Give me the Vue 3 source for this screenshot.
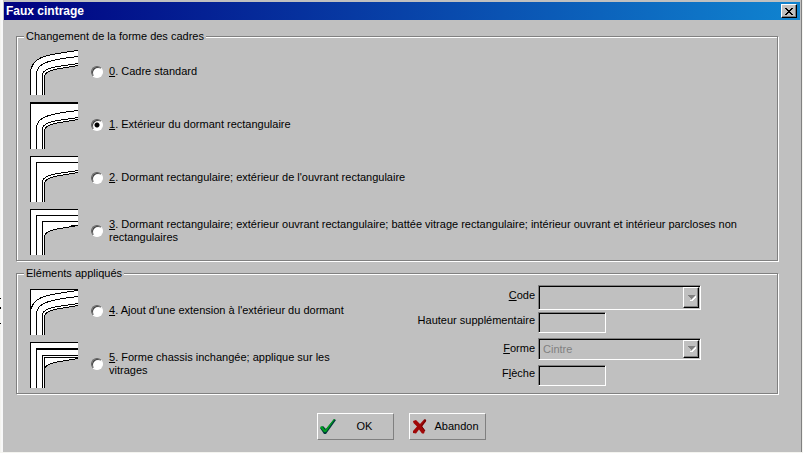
<script setup>
import { ref } from 'vue'

const choice = ref(1)

const outer = 'M0.5 47V25.5C0.5 19 3 14 9.5 10.5C16 7 32 4.5 48 2.5'
const middle = 'M6.5 47V27C6.5 22 9 18 13 16C18 13 30 10.5 48 8.5'
const inner = 'M12.5 47V28C12.5 25 14 22.5 18 21C23 18.5 36 17.5 48 15.5'
const innermost = 'M14.5 47V29C14.5 26 16 24.5 19 23.5C25 20.5 37 19.5 48 17.5'
const close = 'L48 1L0 1L0 47Z'
const square = 'M0.5 47V1.5H48'
const squareMiddle = 'M6.5 47V7.5H48'

const frames = [
  {
    id: 0,
    text: 'Cadre standard',
    view: '0 1 48 47',
    fill: 'M0.5 47V25.5C0.5 19 3 14 9.5 10.5C16 7 32 4.5 48 2.5V17.5C37 19.5 25 20.5 19 23.5C16 24.5 14.5 26 14.5 29V47Z',
    lines: [outer, middle, inner, innermost],
  },
  {
    id: 1,
    text: 'Extérieur du dormant rectangulaire',
    fill: innermost + close,
    lines: ['M0.5 47V0.5H48', 'M0.5 1.5H48', middle, inner, innermost],
  },
  {
    id: 2,
    text: "Dormant rectangulaire; extérieur de l'ouvrant rectangulaire",
    fill: innermost + close,
    lines: [square, squareMiddle, inner, innermost],
  },
  {
    id: 3,
    text: 'Dormant rectangulaire; extérieur ouvrant rectangulaire; battée vitrage rectangulaire; intérieur ouvrant et intérieur parcloses non rectangulaires',
    fill: innermost + close,
    lines: [square, squareMiddle, 'M12.5 47V13.5H48', innermost, 'M41 17.5H48'],
  },
]

const additions = [
  {
    id: 4,
    text: "Ajout d'une extension à l'extérieur du dormant",
    fill: innermost + close,
    lines: [square, outer, middle, inner, innermost],
  },
  {
    id: 5,
    text: 'Forme chassis inchangée; applique sur les vitrages',
    fill: innermost + close,
    lines: [square, squareMiddle, 'M6.5 8.5H48', 'M12.5 47V14.5H48', 'M14.5 47V16.5H48', innermost],
  },
]

const groups = [
  { title: 'Changement de la forme des cadres', options: frames, form: false },
  { title: 'Eléments appliqués', options: additions, form: true },
]
</script>

<template>
  <main class="dialog">
    <header class="titlebar">
      <h1>Faux cintrage</h1>
      <button class="close" type="button" aria-label="Fermer">
        <svg width="8" height="7" viewBox="0 0 8 7" shape-rendering="crispEdges">
          <path d="M0 0h2v1h1v1h2v-1h1v-1h2v1h-1v1h-1v1h-1v1h1v1h1v1h1v1h-2v-1h-1v-1h-2v1h-1v1h-2v-1h1v-1h1v-1h1v-1h-1v-1h-1v-1h-1z" />
        </svg>
      </button>
    </header>

    <form class="content" @submit.prevent>
      <fieldset v-for="g in groups" :key="g.title" :class="{ applied: g.form }">
        <legend>{{ g.title }}</legend>
        <div class="options">
          <div v-for="o in g.options" :key="o.id" class="option">
            <svg class="profile" width="48" height="47" :viewBox="o.view || '0 0 48 47'" shape-rendering="crispEdges">
              <path :d="o.fill" fill="#fff" />
              <path v-for="(d, i) in o.lines" :key="i" :d="d" fill="none" stroke="#000" />
            </svg>
            <div class="choice">
              <input :id="'option' + o.id" v-model="choice" type="radio" name="shape" :value="o.id" />
              <label :for="'option' + o.id"><u>{{ o.id }}</u>. {{ o.text }}</label>
            </div>
          </div>
        </div>
        <div v-if="g.form" class="fields">
          <label for="code"><u>C</u>ode</label>
          <div class="combo tall">
            <select id="code" disabled><option></option></select>
            <span class="arrow"><svg width="9" height="6" viewBox="0 0 9 6" shape-rendering="crispEdges"><path d="M2 5h2l4-4h1v1l-4 4h-1z" fill="#fff" /><path d="M0 0h8l-4 4z" fill="#808080" /></svg></span>
          </div>
          <label class="low" for="height">Hauteur supplémentaire</label>
          <input id="height" class="text" type="text" disabled />
          <label for="form"><u>F</u>orme</label>
          <div class="combo">
            <select id="form" disabled><option>Cintre</option></select>
            <span class="arrow"><svg width="9" height="6" viewBox="0 0 9 6" shape-rendering="crispEdges"><path d="M2 5h2l4-4h1v1l-4 4h-1z" fill="#fff" /><path d="M0 0h8l-4 4z" fill="#808080" /></svg></span>
          </div>
          <label class="low" for="rise">F<u>l</u>èche</label>
          <input id="rise" class="text" type="text" disabled />
        </div>
      </fieldset>

      <footer class="actions">
        <button type="submit">
          <svg width="18" height="17" viewBox="0 0 18 17">
            <path d="M1 10l3-2 3 3 8-10 2 1-10 14H5z" fill="#003b3b" />
            <path d="M1 9l2-1 3 4 9-11h1L7 14H5z" fill="#00a020" />
          </svg>
          <span>OK</span>
        </button>
        <button type="button">
          <svg width="18" height="17" viewBox="0 0 18 17">
            <path d="M2 3l3-1 4 4 4-4.500 2 .5v1.500l-4 5 3 4-1 3h-2l-3-4-3 4-3-.5v-2l4-4.500-3.500-3.500z" fill="#a00808" />
            <path d="M13 2l2 0-4.500 6 3.500 5" fill="none" stroke="#700000" />
          </svg>
          <span>Abandon</span>
        </button>
      </footer>
    </form>
  </main>
</template>

<style>
/* Slivers of the window lying behind the dialog show at its left edge. */
body {
  margin: 0;
  background:
    linear-gradient(#000, #000) 0 298px / 1px 1px no-repeat,
    linear-gradient(#000, #000) 0 307px / 1px 2px no-repeat,
    linear-gradient(#000, #000) 0 323px / 1px 1px no-repeat,
    #f4f4f0;
}
</style>

<style scoped>
* {
  box-sizing: border-box;
}

.dialog {
  margin: 0 1px 1px;
  padding: 2px 1px 12px;
  border-left: 2px solid #fff;
  border-left-color: #f8f8f8;
  border-right: 1px solid #808080;
  background: #c0c0c0;
  color: #000;
  font: 11px/13px "Liberation Sans", Arial, sans-serif;
}

button,
input,
select {
  margin: 0;
  font: inherit;
  color: inherit;
}

.titlebar {
  display: flex;
  align-items: center;
  justify-content: space-between;
  height: 18px;
  padding: 0 3px 0 2px;
  background: linear-gradient(to right, #000080, #1084d0);
}

h1 {
  margin: 0;
  color: #fff;
  font-size: 12px;
  line-height: 14px;
}

.close {
  display: flex;
  align-items: center;
  justify-content: center;
  width: 16px;
  height: 14px;
  padding: 0;
  border: 1px solid;
  border-color: #fff #000 #000 #fff;
  background: #c0c0c0;
  box-shadow: inset -1px -1px #808080;
}

.content {
  padding: 10px 22px 0 12px;
}

fieldset {
  min-width: 0;
  margin: 0 0 6px;
  padding: 6px 13px 5px;
  border: 1px solid #808080;
  box-shadow: 1px 1px #fff, inset 1px 1px #fff;
}

legend {
  margin-left: -6px;
  padding: 0 2px;
  background: #c0c0c0;
}

.applied {
  display: flex;
  justify-content: space-between;
  padding-top: 8px;
}

.options {
  display: grid;
  gap: 6px;
}

.option {
  display: flex;
  align-items: center;
}

.choice {
  display: flex;
  align-items: center;
  padding-bottom: 2px;
}

.choice label {
  max-width: 640px;
  margin-left: 6px;
}

.applied .choice label {
  max-width: 240px;
}

.profile {
  flex: none;
  margin-right: 13px;
}

input[type="radio"] {
  flex: none;
  width: 12px;
  height: 12px;
  appearance: none;
  border: 1px solid;
  border-color: #606060 #fff #fff #606060;
  border-radius: 50%;
  background: #fff;
  box-shadow: inset 1px 1px #404040;
}

input[type="radio"]:checked {
  background: radial-gradient(circle, #000 2px, #fff 3px);
}

.fields {
  display: grid;
  grid-template-columns: auto 163px;
  grid-template-rows: 27px 26px 27px 21px;
  column-gap: 3px;
  margin: -3px 63px 0 0;
}

.fields label {
  padding-top: 4px;
  text-align: right;
}

.fields .low {
  padding-top: 2px;
}

.combo {
  position: relative;
  height: 22px;
}

.tall {
  height: 25px;
}

select,
.text {
  width: 100%;
  height: 100%;
  appearance: none;
  padding: 0 4px;
  border: 1px solid;
  border-color: #808080 #fff #fff #808080;
  border-radius: 0;
  background: #c0c0c0;
  box-shadow: inset 1px 1px #000;
  color: #808080;
  opacity: 1;
}

.text {
  width: 68px;
  height: 21px;
}

.arrow {
  position: absolute;
  top: 2px;
  right: 2px;
  bottom: 2px;
  display: flex;
  align-items: center;
  justify-content: center;
  width: 16px;
  border: 1px solid;
  border-color: #fff #000 #000 #fff;
  box-shadow: inset -1px -1px #808080;
  pointer-events: none;
}

.actions {
  display: flex;
  justify-content: center;
  gap: 15px;
  padding: 13px 0 0 8px;
}

.actions button {
  display: flex;
  align-items: center;
  width: 77px;
  height: 27px;
  padding: 0 4px 0 1px;
  border: 1px solid;
  border-color: #fff #808080 #808080 #fff;
  background: #c0c0c0;
}

.actions span {
  flex: 1;
  padding-left: 4px;
  text-align: center;
}
</style>
